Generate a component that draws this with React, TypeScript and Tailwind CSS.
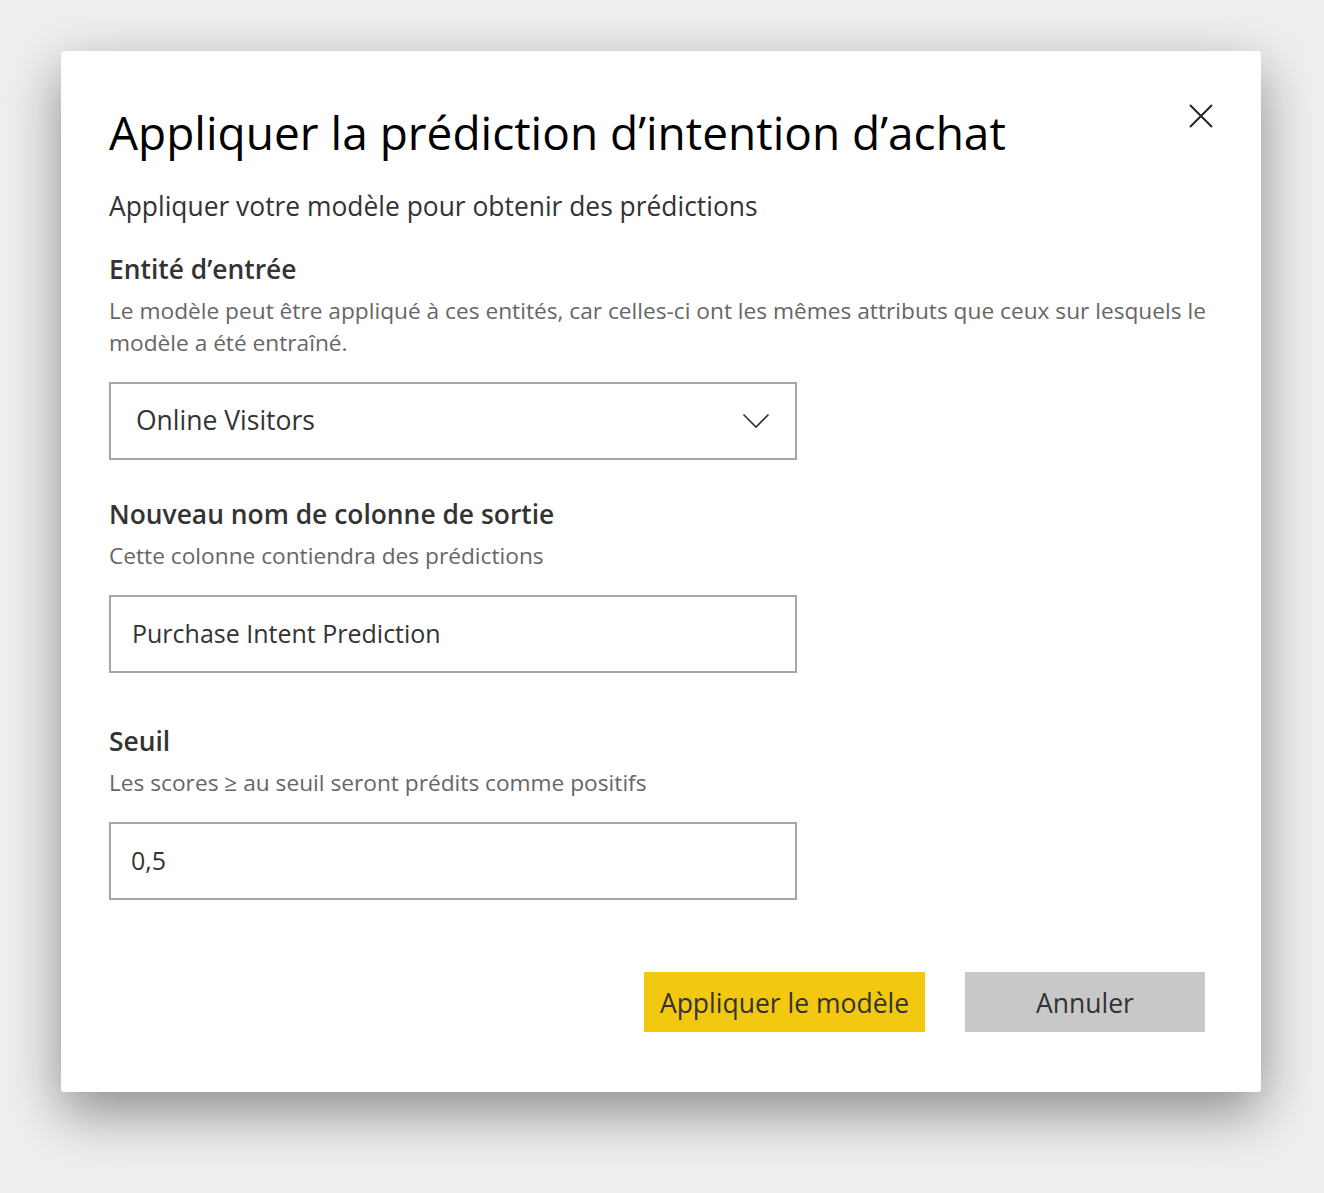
function Champ(props: { valeur: string; dropdown?: boolean; padX: string; taille: string }) {
  return (
    <div
      className={`flex h-[78px] w-[688px] items-center justify-between border-2 border-[#a6a6a6] ${props.padX} pr-6`}
    >
      <span className={`${props.taille} text-[#333333]`}>{props.valeur}</span>
      {props.dropdown && (
        <svg width="28" height="16" viewBox="0 0 28 16" className="mr-[1px]">
          <path d="M1.5 1.5 L14 14 L26.5 1.5" fill="none" stroke="#333333" strokeWidth="1.6" />
        </svg>
      )}
    </div>
  );
}

export default function App() {
  return (
    <div
      className="min-h-[1193px] w-full bg-[#efefef] pl-[61px] pt-[51px]"
      style={{ fontFamily: '"Open Sans", "Noto Sans", sans-serif' }}
    >
      <div className="relative flex h-[1041px] w-[1200px] flex-col rounded-[3px] bg-white pl-[48px] pr-[48px] shadow-[0_20px_55px_rgba(0,0,0,0.42)]">
        <button className="absolute right-[48px] top-[53px]">
          <svg width="24" height="24" viewBox="0 0 24 24">
            <path d="M1 1 L23 23 M23 1 L1 23" stroke="#252525" strokeWidth="2" fill="none" />
          </svg>
        </button>

        <h1 className="mt-[51px] text-[46px] leading-[60px] font-normal text-black">
          Appliquer la prédiction d’intention d’achat
        </h1>
        <p className="mt-[27px] text-[26.4px] leading-[34px] text-[#333333]">
          Appliquer votre modèle pour obtenir des prédictions
        </p>

        <h2 className="mt-[26px] text-[26.4px] leading-[40px] font-semibold text-[#333333]">
          Entité d’entrée
        </h2>
        <p className="mt-[6px] text-[22.7px] leading-[32px] text-[#666666]">
          Le modèle peut être appliqué à ces entités, car celles-ci ont les mêmes attributs que ceux sur lesquels le
          modèle a été entraîné.
        </p>
        <div className="mt-[23px]">
          <Champ valeur="Online Visitors" dropdown padX="pl-[25px]" taille="text-[26.5px]" />
        </div>

        <h2 className="mt-[34px] text-[26.4px] leading-[40px] font-semibold text-[#333333]">
          Nouveau nom de colonne de sortie
        </h2>
        <p className="mt-[6px] text-[22.7px] leading-[32px] text-[#666666]">
          Cette colonne contiendra des prédictions
        </p>
        <div className="mt-[23px]">
          <Champ valeur="Purchase Intent Prediction" padX="pl-[21px]" taille="text-[25px]" />
        </div>

        <h2 className="mt-[48px] text-[26.4px] leading-[40px] font-semibold text-[#333333]">Seuil</h2>
        <p className="mt-[6px] text-[22.7px] leading-[32px] text-[#666666]">
          Les scores ≥ au seuil seront prédits comme positifs
        </p>
        <div className="mt-[23px]">
          <Champ valeur="0,5" padX="pl-[20px]" taille="text-[25px]" />
        </div>

        <div className="mt-[72px] flex justify-end gap-[40px] pr-[8px]">
          <button className="h-[60px] w-[281px] bg-[#f2c811] pt-[3px] text-[26.5px] text-[#333333]">
            Appliquer le modèle
          </button>
          <button className="h-[60px] w-[240px] bg-[#c8c8c8] pt-[3px] text-[26.5px] text-[#333333]">
            Annuler
          </button>
        </div>
      </div>
    </div>
  );
}
